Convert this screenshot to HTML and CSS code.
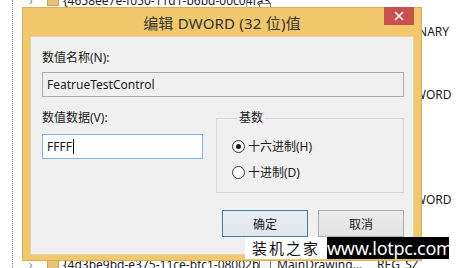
FILE: index.html
```html
<!DOCTYPE html>
<html lang="zh-CN">
<head>
<meta charset="utf-8">
<title>编辑 DWORD (32 位)值</title>
<link rel="stylesheet" href="styles.css">
</head>
<body>
<div class="stage">
  <div class="tree-line"></div>

  <div class="bg-row row-top">
    <span class="arrow">›</span><span class="folder"></span><span class="key">{4658ee7e-f050-11d1-b6bd-00c04fa3</span>
  </div>
  <div class="pane-split"></div>
  <div class="val-icon top-icon"></div>

  <div class="bg-type t1">REG_BINARY</div>
  <div class="bg-type t2">REG_DWORD</div>
  <div class="bg-type t3">REG_DWORD</div>

  <div class="bg-row row-bottom">
    <span class="arrow">›</span><span class="folder"></span><span class="key">{4d3be9bd-e375-11ce-bfc1-08002be1</span>
  </div>
  <div class="bg-value">
    <span class="val-icon"></span><span class="val-name">MainDrawingDevice</span><span class="val-type">REG_SZ</span>
  </div>

  <div class="dialog">
    <div class="titlebar">
      <span class="title">编辑 DWORD (32 位)值</span>
      <div class="close">
        <svg width="10" height="10" viewBox="0 0 10 10"><path d="M1 1 L9 9 M9 1 L1 9" stroke="#fff" stroke-width="1.6" fill="none"/></svg>
      </div>
    </div>
    <div class="body">
      <div class="label">数值名称(N):</div>
      <div class="textbox readonly">FeatrueTestControl</div>
      <div class="row">
        <div class="col">
          <div class="label">数值数据(V):</div>
          <div class="textbox focused">FFFF<span class="caret"></span></div>
        </div>
        <fieldset class="group">
          <legend>基数</legend>
          <div class="radio"><span class="dot checked"></span><span>十六进制(H)</span></div>
          <div class="radio"><span class="dot"></span><span>十进制(D)</span></div>
        </fieldset>
      </div>
      <div class="buttons">
        <div class="btn default">确定</div>
        <div class="btn">取消</div>
      </div>
    </div>
  </div>

  <div class="watermark"><span class="wm-cn">装机之家</span><span class="wm-url">www.lotpc.com</span></div>
</div>
</body>
</html>
```

FILE: styles.css
```css
* { box-sizing: border-box; }
html, body { margin: 0; padding: 0; }
body {
  width: 456px; height: 268px; overflow: hidden; background: #fff;
  font-family: "Noto Sans", "Noto Sans CJK SC", sans-serif;
  font-size: 12px; color: #000;
}
.stage { position: relative; width: 456px; height: 268px; overflow: hidden; }

/* background explorer */
.tree-line { position: absolute; left: 12px; top: 0; bottom: 0; border-left: 1px dotted #8a8a8a; }
.bg-row { position: absolute; left: 29px; height: 16px; line-height: 16px; display: flex; align-items: center; white-space: nowrap; color: #1a1a1a; }
.row-top { top: -7px; }
.row-bottom { top: 257px; }
.arrow { width: 8px; color: #888; font-size: 12px; margin-right: 10px; }
.folder { width: 12px; height: 10px; background: #e6c377; border: 1px solid #c9a04e; margin-right: 4px; }
.pane-split { position: absolute; left: 246px; top: 0; height: 10px; border-left: 1px solid #9a9a9a; }
.val-icon { display: inline-block; width: 12px; height: 12px; border: 1px solid #7a7a7a; background: #f4f4f4; }
.top-icon { position: absolute; left: 259px; top: 3px; }
.bg-type { position: absolute; left: 378px; height: 16px; line-height: 16px; white-space: nowrap; color: #1a1a1a; }
.t1 { top: 24px; }
.t2 { top: 87px; }
.t3 { top: 192px; }
.bg-value { position: absolute; left: 259px; top: 257px; height: 16px; line-height: 16px; display: flex; align-items: center; white-space: nowrap; color: #1a1a1a; }
.bg-value .val-icon { margin-right: 6px; }
.val-name { width: 100px; padding-right: 12px; overflow: hidden; text-overflow: ellipsis; }

/* dialog */
.dialog {
  position: absolute; left: 22px; top: 7px; width: 400px; height: 254px;
  background: #f1c86c; border: 1px solid #dcae55;
  padding: 0 7px 5px; display: flex; flex-direction: column;
}
.titlebar { height: 28px; position: relative; display: flex; align-items: center; justify-content: center; }
.title { font-size: 15px; color: #333; letter-spacing: 0.2px; }
.close {
  position: absolute; top: -1px; right: 0; width: 30px; height: 18px;
  background: #c9514d; display: flex; align-items: center; justify-content: center;
}
.body {
  flex: 1; background: #f0f0f0; border: 1px solid #e6d2a2;
  padding: 13px 9px 0 11px; display: flex; flex-direction: column;
}
.label { line-height: 16px; color: #1a1a1a; }
.textbox {
  height: 25px; margin-top: 6px; border: 1px solid #ababab;
  padding-left: 4px; line-height: 23px; font-size: 12px; color: #1a1a1a;
  display: flex; align-items: center;
}
.readonly { background: #f0f0f0; }
.focused { background: #fff; border-color: #7eb4ea; margin-top: 8px; }
.caret { display: inline-block; width: 1px; height: 15px; background: #000; margin-left: 1px; }
.row { display: grid; grid-template-columns: 161px 1fr; column-gap: 13px; margin-top: 13px; }
.group {
  margin: 0; padding: 12px 0 12px 15px; border: 1px solid #d8d8d8; border-radius: 0;
  min-width: 0;
}
.group legend { padding: 0 2px; margin-left: 5px; line-height: 16px; color: #1a1a1a; }
.radio { display: flex; align-items: center; height: 16px; color: #1a1a1a; }
.radio + .radio { margin-top: 10px; }
.dot {
  width: 13px; height: 13px; border-radius: 50%; border: 1px solid #333; background: #fff;
  margin-right: 3px; display: flex; align-items: center; justify-content: center;
}
.dot.checked::after { content: ""; width: 5px; height: 5px; border-radius: 50%; background: #1a1a1a; }
.buttons { display: flex; justify-content: flex-end; gap: 10px; margin-top: 17px; }
.btn {
  width: 86px; height: 27px; border: 1px solid #acacac;
  background: linear-gradient(#ececec, #e2e2e2);
  display: flex; align-items: center; justify-content: center; color: #1a1a1a;
}
.btn.default { border-color: #3c7fb1; background: linear-gradient(#e9eef3, #e0e6ec); }

/* watermark */
.watermark { position: absolute; left: 245px; top: 237px; height: 22px; display: flex; }
.wm-cn { width: 82px; background: #fff; color: #111; font-size: 15px; letter-spacing: 2px; line-height: 22px; text-align: center; }
.wm-url { width: 122px; background: #000; color: #fff; font-size: 18px; line-height: 22px; text-align: center; letter-spacing: -0.3px; }
```
